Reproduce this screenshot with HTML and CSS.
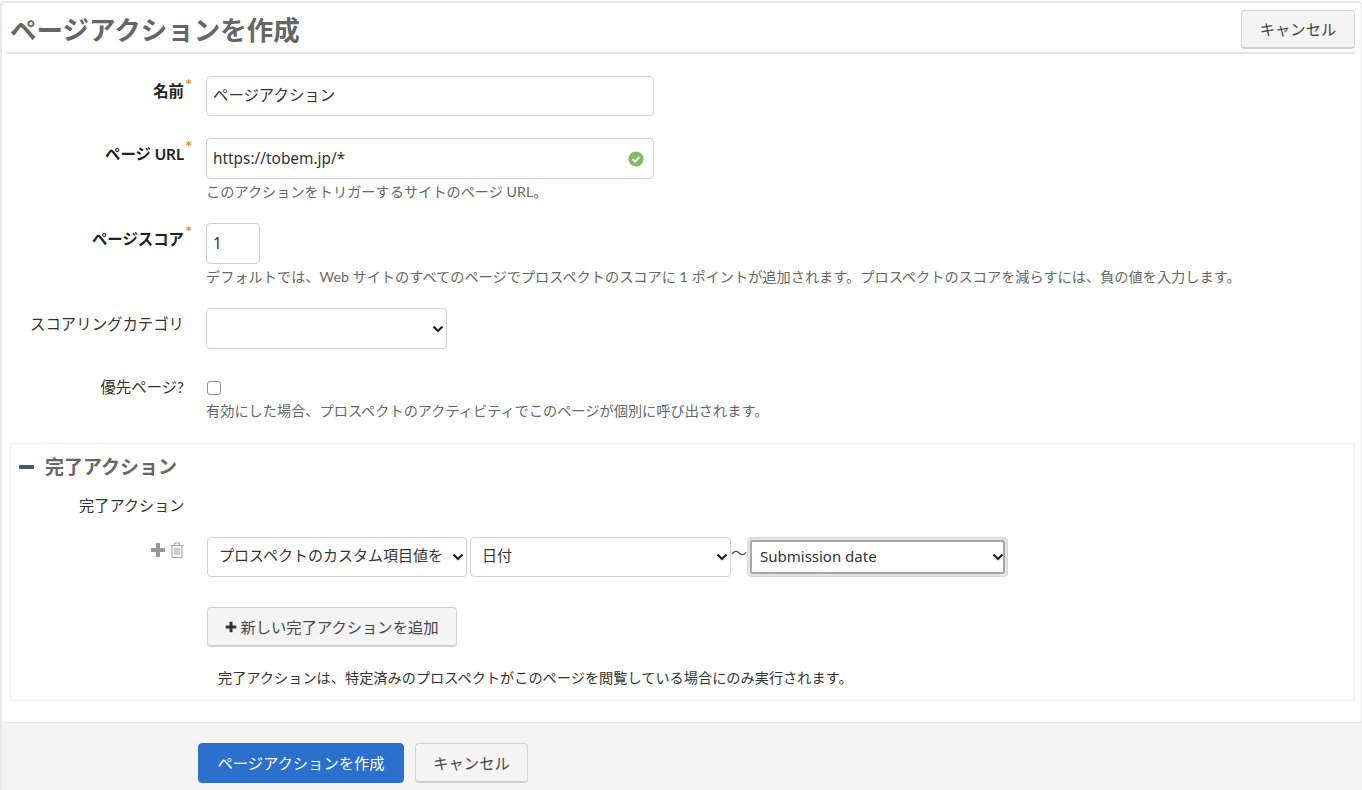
FILE: index.html
```html
<!DOCTYPE html>
<html lang="ja">
<head>
<meta charset="utf-8">
<title>ページアクションを作成</title>
<link rel="stylesheet" href="styles.css">
</head>
<body>
<div class="panel">
  <div class="main">
    <header class="page-head">
      <h1>ページアクションを作成</h1>
      <button class="btn btn-top" type="button">キャンセル</button>
    </header>

    <div class="row row-name">
      <label class="lbl req">名前<span class="star">*</span></label>
      <div class="field"><input class="input w-full" type="text" value="ページアクション"></div>
    </div>

    <div class="row row-url">
      <label class="lbl req">ページ URL<span class="star">*</span></label>
      <div class="field">
        <div class="url-wrap">
          <input class="input w-full tall" type="text" value="https://tobem.jp/*">
          <svg class="ok" viewBox="0 0 16 16" width="16" height="16"><circle cx="8" cy="8" r="7.6" fill="#84bb6a"/><path d="M4.6 8.2l2.4 2.4 4.4-4.6" fill="none" stroke="#fff" stroke-width="1.8"/></svg>
        </div>
        <p class="help">このアクションをトリガーするサイトのページ URL。</p>
      </div>
    </div>

    <div class="row row-score">
      <label class="lbl req">ページスコア<span class="star">*</span></label>
      <div class="field">
        <input class="input w-small tall" type="text" value="1">
        <p class="help">デフォルトでは、Web サイトのすべてのページでプロスペクトのスコアに 1 ポイントが追加されます。プロスペクトのスコアを減らすには、負の値を入力します。</p>
      </div>
    </div>

    <div class="row row-cat">
      <label class="lbl">スコアリングカテゴリ</label>
      <div class="field">
        <div class="sel-wrap w-cat">
          <select class="sel tall"><option></option></select>
          <svg class="chev" viewBox="0 0 12 8" width="12" height="8"><path d="M1.5 1.5L6 6l4.500-4.500" fill="none" stroke="#222" stroke-width="2.200"/></svg>
        </div>
      </div>
    </div>

    <div class="row row-prio">
      <label class="lbl">優先ページ?</label>
      <div class="field">
        <span class="check"></span>
        <p class="help help-prio">有効にした場合、プロスペクトのアクティビティでこのページが個別に呼び出されます。</p>
      </div>
    </div>

    <section class="box">
      <h2 class="box-title"><span class="minus"></span>完了アクション</h2>
      <div class="sub-lbl">完了アクション</div>
      <div class="action-row">
        <div class="tools">
          <svg viewBox="0 0 16 16" width="16" height="16"><path d="M6 1h4v5h5v4h-5v5H6v-5H1V6h5z" fill="#999"/></svg>
          <svg viewBox="0 0 14 16" width="14" height="16"><path d="M0.500 3.500h13M4.500 3.500V1h5v2.500M2 3.500v11a1 1 0 0 0 1 1h8a1 1 0 0 0 1-1v-11M5 6v7M7 6v7M9 6v7" fill="none" stroke="#a3a3a3" stroke-width="1.100"/></svg>
        </div>
        <div class="sel-wrap w-a">
          <select class="sel sel-a"><option>プロスペクトのカスタム項目値を変更</option></select>
          <svg class="chev chev-near" viewBox="0 0 12 8" width="12" height="8"><path d="M1.500 1.500L6 6l4.500-4.500" fill="none" stroke="#222" stroke-width="2.200"/></svg>
        </div>
        <div class="sel-wrap w-b">
          <select class="sel sel-a"><option>日付</option></select>
          <svg class="chev chev-near" viewBox="0 0 12 8" width="12" height="8"><path d="M1.500 1.500L6 6l4.500-4.500" fill="none" stroke="#222" stroke-width="2.200"/></svg>
        </div>
        <span class="tilde">〜</span>
        <div class="ring">
          <div class="sel-wrap w-c">
            <select class="sel sel-c"><option>Submission date</option></select>
            <svg class="chev chev-edge" viewBox="0 0 12 8" width="12" height="8"><path d="M1.500 1.500L6 6l4.500-4.500" fill="none" stroke="#222" stroke-width="2.200"/></svg>
          </div>
        </div>
      </div>
      <button class="btn btn-add" type="button">
        <svg viewBox="0 0 16 16" width="12" height="12"><path d="M6 1h4v5h5v4h-5v5H6v-5H1V6h5z" fill="#333"/></svg>
        新しい完了アクションを追加
      </button>
      <p class="note">完了アクションは、特定済みのプロスペクトがこのページを閲覧している場合にのみ実行されます。</p>
    </section>
  </div>

  <footer class="foot">
    <button class="btn btn-primary" type="button">ページアクションを作成</button>
    <button class="btn btn-cancel" type="button">キャンセル</button>
  </footer>
</div>
</body>
</html>
```
FILE: styles.css
```css
* { box-sizing: border-box; }
html, body { height: 100%; }
body {
  margin: 0;
  background: #fff;
  color: #333;
  font-family: Lato, "Noto Sans CJK JP", sans-serif;
  font-size: 15px;
  line-height: 20px;
  overflow: hidden;
}
.panel {
  margin: 1px 0 0 0;
  height: 789px;
  border: 2px solid #e8e8e8;
  border-right-width: 1px;
  border-bottom: 0;
  border-radius: 4px 4px 0 0;
  display: flex;
  flex-direction: column;
}
.main { flex: 1; padding: 0 6px 0 8px; }
.page-head {
  height: 51px;
  border-bottom: 2px solid #e6e6e6;
  display: flex;
  align-items: flex-start;
  justify-content: space-between;
  margin-left: -3px;
  padding-left: 3px;
}
h1 {
  margin: 8px 0 0;
  font-size: 26.5px;
  line-height: 38px;
  font-weight: 700;
  color: #666;
}
.btn {
  font-family: inherit;
  font-size: 15.3px;
  line-height: 20px;
  color: #444;
  background: #f4f4f4;
  border: 1px solid #d4d4d4;
  border-bottom: 2px solid #cfcfcf;
  border-radius: 4px;
  padding: 0;
}
.btn-top { width: 114px; height: 39px; margin-top: 7px; }
.row { display: grid; grid-template-columns: 196px 1fr; }
.lbl { display: block; text-align: right; padding-right: 22px; position: relative; font-size: 15.4px; line-height: 20px; color: #333; white-space: nowrap; }
.req { font-weight: 700; color: #222; }
.star { position: absolute; right: 14px; top: 0; color: #e8862a; font-size: 16px; line-height: 16px; font-weight: 700; }
.row-name { margin-top: 22px; }
.row-name .lbl { padding-top: 5px; }
.row-url { margin-top: 22px; }
.row-url .lbl { padding-top: 6px; }
.row-score { margin-top: 21px; }
.row-score .lbl { padding-top: 6px; }
.row-cat { margin-top: 21px; }
.row-cat .lbl { padding-top: 6px; }
.row-prio { margin-top: 31px; }
.row-prio .lbl { margin-top: -3px; }
.input {
  display: block;
  height: 40px;
  font-family: "Noto Sans", "Noto Sans CJK JP", sans-serif;
  font-size: 15.4px;
  color: #333;
  background: #fff;
  border: 1px solid #cfcfcf;
  border-radius: 4px;
  padding: 0 6px 4px;
  outline: 0;
}
.tall { height: 41px; padding-bottom: 1px; }
.w-full { width: 448px; }
.w-small { width: 54px; }
.url-wrap { position: relative; width: 448px; }
.ok { position: absolute; right: 10px; top: 13px; }
.help { margin: 3px 0 0; font-size: 14.2px; line-height: 20px; color: #666; white-space: nowrap; }
.help-prio { margin-top: 6px; }
.sel-wrap { position: relative; }
.sel {
  appearance: none;
  -webkit-appearance: none;
  display: block;
  width: 100%;
  height: 41px;
  font-family: "Noto Sans", "Noto Sans CJK JP", sans-serif;
  font-size: 15px;
  color: #333;
  background: #fff;
  border: 1px solid #d2d2d2;
  border-radius: 4px;
  padding: 0 24px 2px 11px;
  outline: 0;
}
.chev { position: absolute; right: 3px; top: 17px; pointer-events: none; }
.w-cat { width: 241px; }
.check {
  display: block;
  width: 14px;
  height: 14px;
  margin: 1px 0 0 1px;
  border: 1px solid #8f8f8f;
  border-radius: 3px;
  background: #fff;
}
.box {
  margin-top: 22px;
  height: 258px;
  border: 1px solid #eeeeee;
  padding: 0 0 0 8px;
}
.box-title {
  margin: 11px 0 0;
  display: flex;
  align-items: center;
  font-size: 19px;
  line-height: 24px;
  font-weight: 700;
  color: #666;
}
.minus { width: 15px; height: 4px; border-radius: 1px; background: #46566e; margin-right: 11px; }
.sub-lbl { margin: 16px 0 0 60px; font-size: 15.2px; line-height: 20px; }
.action-row { display: flex; align-items: flex-start; margin-top: 22px; }
.tools { width: 188px; display: flex; justify-content: flex-end; align-items: center; gap: 4px; padding: 3px 23px 0 0; height: 22px; }
.w-a { width: 260px; margin-right: 3px; }
.w-b { width: 261px; }
.sel-a { height: 40px; padding: 0 24px 4px 11px; }
.chev-near { right: 3px; top: 16px; }
.tilde { width: 16px; text-align: center; font-size: 16px; line-height: 32px; color: #555; }
.ring { border: 1px solid #d8d8d8; border-radius: 4px; padding: 2px; background: #e4e4e4; }
.w-c { width: 255px; }
.sel-c { height: 34px; padding-left: 8px; border: 2px solid #a6a6a6; border-radius: 3px; }
.chev-edge { right: 1px; top: 13px; }
.btn-add {
  display: flex;
  align-items: center;
  justify-content: center;
  gap: 3px;
  width: 250px;
  height: 40px;
  margin: 30px 0 0 188px;
}
.note { margin: 21px 0 0 199px; font-size: 14.2px; line-height: 20px; color: #333; white-space: nowrap; }
.foot {
  height: 68px;
  flex: none;
  background: #f4f4f4;
  border-top: 1px solid #e4e4e4;
  display: flex;
  gap: 11px;
  padding: 20px 0 0 196px;
  align-items: flex-start;
  margin-right: -1px;
}
.btn-primary { width: 206px; height: 40px; background: #2b70cc; border: 1px solid #2b70cc; color: #fff; }
.btn-cancel { width: 113px; height: 40px; background: #f5f5f5; }
```
